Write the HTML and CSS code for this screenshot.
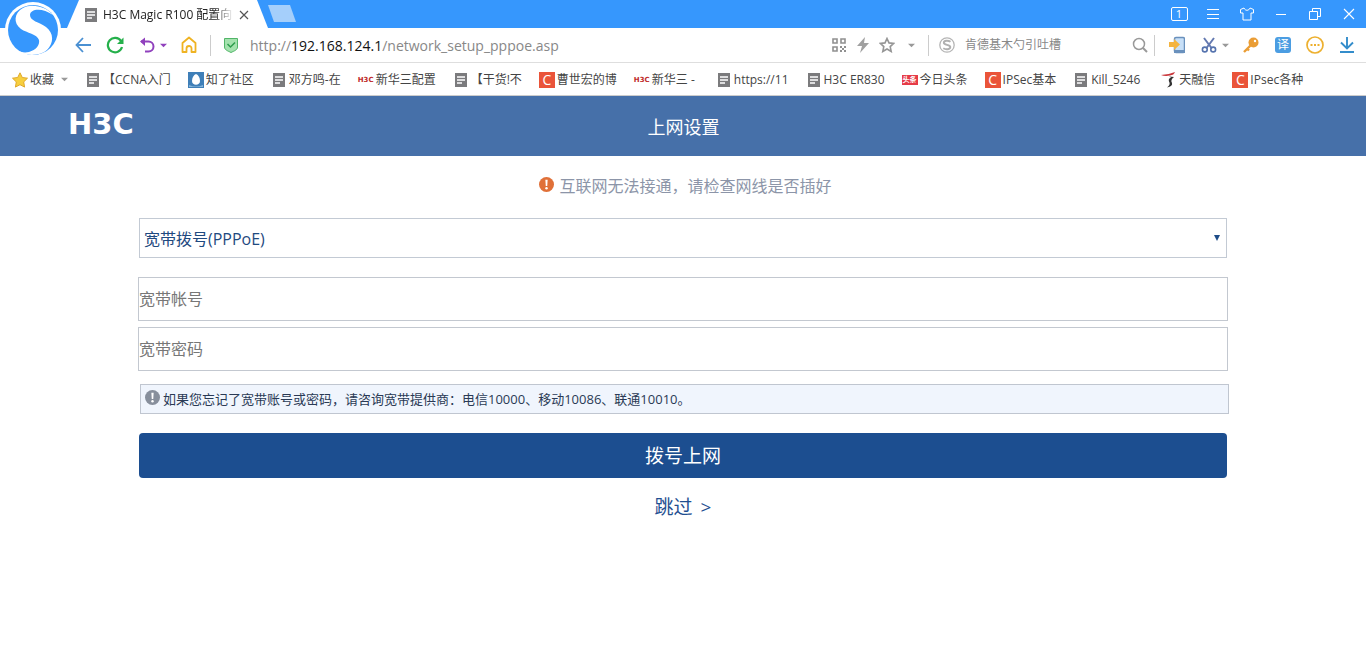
FILE: index.html
```html
<!DOCTYPE html>
<html lang="zh-CN">
<head>
<meta charset="utf-8">
<title>H3C Magic R100 配置向导</title>
<link rel="stylesheet" href="styles.css">
</head>
<body>
<svg width="0" height="0" class="defs" aria-hidden="true">
  <symbol id="doc" viewBox="0 0 16 16"><path d="M2 1h12v14H2z" fill="#7b7b7d"/><path d="M4 5h8M4 8h8M4 11h5" stroke="#fff" stroke-width="1.3"/></symbol>
  <symbol id="caret" viewBox="0 0 8 8"><path d="M0 2h8L4 6z"/></symbol>
  <symbol id="exclaim" viewBox="0 0 16 16"><circle cx="8" cy="8" r="8"/><path d="M6.800 3h2.400l-.4 6.500H7.200z" fill="#fff"/><circle cx="8" cy="12" r="1.300" fill="#fff"/></symbol>
</svg>

<div class="browser">
  <div class="logo">
    <svg viewBox="0 0 56 56" width="56" height="56"><circle cx="28" cy="28" r="28" fill="#fff"/><circle cx="28" cy="28" r="25" fill="#3697fd"/><path d="M48 13C42 5 27 1 18 6C9 11 8 21 16 27C22 31 32 32 34 38C35 43 31 48 24 50C19 51 15 50 12 48C18 54 34 55 42 48C49 41 49 31 41 25C34 20 25 19 25 13C25 7 37 5 48 13Z" fill="#fff"/></svg>
  </div>
  <div class="titlebar">
    <div class="tab">
      <svg class="i16"><use href="#doc"/></svg>
      <span class="tab-title">H3C Magic R100 配置向</span>
      <button class="tab-close" aria-label="关闭标签"><svg width="10" height="10" viewBox="0 0 10 10"><path d="M1 1l8 8M9 1L1 9" stroke="#555" stroke-width="1.200"/></svg></button>
    </div>
    <button class="newtab" aria-label="新标签"></button>
    <div class="window-buttons">
      <button aria-label="标签数"><span class="count">1</span></button>
      <button aria-label="菜单"><svg width="14" height="12" viewBox="0 0 14 12"><path d="M1 1.500h12M1 6.500h12M1 10.500h12" stroke="#fff" stroke-width="1"/></svg></button>
      <button aria-label="皮肤"><svg width="16" height="14" viewBox="0 0 16 14"><path d="M5 1L1.500 2.500V6H4v7h8V6h2.500V2.500L11 1C10 4 6 4 5 1z" fill="none" stroke="#fff"/></svg></button>
      <button aria-label="最小化"><svg width="12" height="12" viewBox="0 0 12 12"><path d="M1 6.500h10" stroke="#fff"/></svg></button>
      <button aria-label="还原"><svg width="12" height="12" viewBox="0 0 12 12"><path d="M.5 3.500h8v8h-8zM3.500 3V.5h8v8H9" fill="none" stroke="#fff"/></svg></button>
      <button aria-label="关闭"><svg width="12" height="12" viewBox="0 0 12 12"><path d="M1 1l10 10M11 1L1 11" stroke="#fff" stroke-width="1.100"/></svg></button>
    </div>
  </div>

  <div class="toolbar">
    <button class="tool" aria-label="后退"><svg width="16" height="16" viewBox="0 0 16 16"><path d="M8 1L1.500 8L8 15M2 8h14" fill="none" stroke="#4a90d2" stroke-width="1.800"/></svg></button>
    <button class="tool" aria-label="刷新"><svg width="18" height="18" viewBox="0 0 18 18"><path d="M15 5A7.200 7.200 0 1 0 16 11" fill="none" stroke="#25b04b" stroke-width="2.200"/><path d="M17.500 1.500V8H11z" fill="#25b04b"/></svg></button>
    <button class="tool wide" aria-label="撤销"><svg width="16" height="16" viewBox="0 0 16 16"><path d="M2 4.500h7.500a5 5 0 0 1 0 10H6" fill="none" stroke="#9041bd" stroke-width="2"/><path d="M6 .5L1 4.500l5 4.500" fill="#9041bd"/></svg><svg class="caret purple"><use href="#caret"/></svg></button>
    <button class="tool" aria-label="主页"><svg width="16" height="18" viewBox="0 0 16 18"><path d="M1.500 7L8 1.500L14.500 7v9h-4v-3.500a2.500 2.500 0 0 0-5 0V16h-4z" fill="none" stroke="#efb323" stroke-width="1.800" stroke-linejoin="round"/></svg></button>
    <span class="sep"></span>
    <svg class="shield" width="16" height="16" viewBox="0 0 16 16"><path d="M1.500 1.500h13V10C14.500 13 11 14 8 15.500C5 14 1.500 13 1.500 10z" fill="#a4e2ae" stroke="#51b568"/><path d="M4.500 7l3 3l4.500-4.500" fill="none" stroke="#2d9d4c" stroke-width="1.500"/></svg>
    <div class="url">http://<b>192.168.124.1</b>/network_setup_pppoe.asp</div>
    <button class="small" aria-label="二维码"><svg width="14" height="14" viewBox="0 0 14 14"><path d="M1 1h4v4H1zM9 1h4v4H9zM1 9h4v4H1z" fill="none" stroke="#909090" stroke-width="1.600"/><path d="M8 8h2v2H8zM12 8h2v2h-2zM10 10h2v2h-2zM8 12h2v2H8zM12 12h2v2h-2z" fill="#909090"/></svg></button>
    <button class="small" aria-label="加速"><svg width="14" height="16" viewBox="0 0 14 16"><path d="M9 0L1 9h5l-2 7l9-10H8z" fill="#a0a0a0"/></svg></button>
    <button class="small" aria-label="收藏本页"><svg width="16" height="16" viewBox="0 0 16 16"><path d="M8 1.500l2 4.400l4.600.5l-3.400 3.200l1 4.900L8 12l-4.200 2.500l1-4.900L1.400 6.400L6 5.900z" fill="none" stroke="#969696" stroke-width="1.600"/></svg></button>
    <button class="small" aria-label="展开"><svg class="caret"><use href="#caret"/></svg></button>
    <span class="sep"></span>
    <label class="search">
      <svg width="16" height="16" viewBox="0 0 16 16"><circle cx="8" cy="8" r="7.200" fill="none" stroke="#b5b5b5" stroke-width="1.300"/><path d="M11.500 4.800C9 3 4.800 3.500 4.800 5.800C4.800 8.300 11.300 7.500 11.300 10C11.300 12.500 7 13 4.300 11.300" fill="none" stroke="#b0b0b0" stroke-width="1.900"/></svg>
      <input type="text" placeholder="肯德基木勺引吐槽" aria-label="搜索">
      <svg width="16" height="16" viewBox="0 0 16 16"><circle cx="7" cy="7" r="5.500" fill="none" stroke="#999" stroke-width="1.500"/><path d="M11 11l4 4" stroke="#999" stroke-width="2"/></svg>
    </label>
    <span class="sep last"></span>
    <button class="tool" aria-label="手机"><svg width="16" height="18" viewBox="0 0 16 18"><rect x="5.500" y="1.500" width="10" height="15" rx="1.500" fill="#c8e0f8" stroke="#6a91bd" stroke-width="1.500"/><path d="M5 14h11v3H5z" fill="#6a91bd"/><path d="M0 6h5V3l6 5.500L5 14v-3H0z" fill="#f4b440"/></svg></button>
    <button class="tool wide" aria-label="截图"><svg width="16" height="16" viewBox="0 0 16 16"><path d="M3 1l7.500 10M13 1L5.500 11" stroke="#6479b0" stroke-width="2"/><circle cx="3.800" cy="12.500" r="2.400" fill="none" stroke="#5573ae" stroke-width="1.600"/><circle cx="12.200" cy="12.500" r="2.400" fill="none" stroke="#5573ae" stroke-width="1.600"/></svg><svg class="caret"><use href="#caret"/></svg></button>
    <button class="tool" aria-label="密码"><svg width="16" height="16" viewBox="0 0 16 16"><path d="M9 7L1 15M3.500 11l2.500 2.500" stroke="#ea9d35" stroke-width="2.400"/><circle cx="10.500" cy="5.500" r="5" fill="#ea9d35"/><circle cx="12" cy="4" r="1.200" fill="#fff"/></svg></button>
    <button class="tool" aria-label="翻译"><span class="translate">译</span></button>
    <button class="tool" aria-label="更多"><svg width="18" height="18" viewBox="0 0 18 18"><circle cx="9" cy="9" r="8" fill="none" stroke="#edb02f" stroke-width="1.700"/><path d="M4.500 8h2v2h-2zM8 8h2v2H8zM11.500 8h2v2h-2z" fill="#edb02f"/></svg></button>
    <button class="tool" aria-label="下载"><svg width="16" height="16" viewBox="0 0 16 16"><path d="M8 0v11M2 5.500l6 6l6-6M1 15h14" fill="none" stroke="#348dcb" stroke-width="1.900"/></svg></button>
  </div>

  <nav class="bookmarks">
    <a href="#" class="fav"><svg class="i16" viewBox="0 0 16 16"><path d="M8 .8l2.300 4.700l5.200.7l-3.800 3.700l.9 5.200L8 12.700l-4.600 2.400l.9-5.200L.5 6.200l5.200-.7z" fill="#f7cf3e" stroke="#dfa82c"/></svg>收藏<svg class="caret"><use href="#caret"/></svg></a>
    <a href="#"><svg class="i16"><use href="#doc"/></svg>【CCNA入门</a>
    <a href="#"><svg class="i16" viewBox="0 0 16 16"><path d="M0 0h16v16H0z" fill="#3f7fb8"/><path d="M8 2C5.500 3 4 6 4 9C4 14 12 14 12 9C12 6 10.500 3 8 2z" fill="#fff"/><path d="M1 13q7 3 14 0v2H1z" fill="#86b6dc"/></svg>知了社区</a>
    <a href="#"><svg class="i16"><use href="#doc"/></svg>邓方鸣-在</a>
    <a href="#"><span class="h3c-mark">H3C</span>新华三配置</a>
    <a href="#"><svg class="i16"><use href="#doc"/></svg>【干货!不</a>
    <a href="#"><span class="c-mark">C</span>曹世宏的博</a>
    <a href="#" class="trail"><span class="h3c-mark">H3C</span>新华三 -</a>
    <a href="#"><svg class="i16"><use href="#doc"/></svg>https://11</a>
    <a href="#"><svg class="i16"><use href="#doc"/></svg>H3C ER830</a>
    <a href="#"><span class="tt-mark">头条</span>今日头条</a>
    <a href="#"><span class="c-mark">C</span>IPSec基本</a>
    <a href="#" class="trail"><svg class="i16"><use href="#doc"/></svg>Kill_5246</a>
    <a href="#"><svg class="i16" viewBox="0 0 16 16"><path d="M0 3Q7 3 14 0Q13 3 9 3.500Q4 4.500 0 3z" fill="#c9353a"/><path d="M8 4.500l5 .5q-4 3-2 6q1 3-5 4.500q4-3 2-6q-1-3 2-4z" fill="#333"/></svg>天融信</a>
    <a href="#"><span class="c-mark">C</span>IPsec各种</a>
  </nav>
</div>

<header class="page-header">
  <div class="brand">H3C</div>
  <h1>上网设置</h1>
</header>

<main>
  <p class="alert"><svg width="15" height="15"><use href="#exclaim"/></svg><span>互联网无法接通，请检查网线是否插好</span></p>
  <form>
    <div class="select-wrap">
      <select aria-label="上网方式"><option>宽带拨号(PPPoE)</option></select>
      <svg class="select-arrow" viewBox="0 0 6 6"><path d="M0 0h6L3 6z" fill="#1e4c88"/></svg>
    </div>
    <input class="field" type="text" placeholder="宽带帐号" aria-label="宽带帐号">
    <input class="field" type="password" placeholder="宽带密码" aria-label="宽带密码">
    <p class="note"><svg width="15" height="15"><use href="#exclaim"/></svg><span>如果您忘记了宽带账号或密码，请咨询宽带提供商：电信10000、移动10086、联通10010。</span></p>
    <button class="submit" type="button">拨号上网</button>
  </form>
  <a class="skip" href="#"><span>跳过</span><span>&gt;</span></a>
</main>
</body>
</html>
```
FILE: styles.css
```css
* { box-sizing: border-box; }
body {
  margin: 0;
  background: #fff;
  font-family: "Open Sans", "Noto Sans CJK SC", sans-serif;
  font-size: 12px;
  color: #444;
}
button {
  display: flex;
  align-items: center;
  justify-content: center;
  padding: 0;
  border: 0;
  background: none;
  font-family: inherit;
}
a { color: inherit; text-decoration: none; }
svg { flex: none; display: block; }
.defs { position: absolute; }
.i16 { width: 16px; height: 16px; }
.caret { width: 7px; height: 7px; fill: #999; }
.caret.purple { fill: #9041bd; }

.browser { position: relative; }
.logo { position: absolute; left: 5px; top: 2px; z-index: 1; }

.titlebar {
  display: flex;
  height: 28px;
  padding-left: 67px;
  background: #3697fd;
}
.tab {
  display: flex;
  align-items: center;
  width: 201px;
  padding: 2px 18px 0 16px;
  background: #fff;
  clip-path: polygon(0 100%, 12px 0, 190px 0, 100% 100%);
}
.tab-title {
  flex: 1;
  margin-left: 4px;
  white-space: nowrap;
  line-height: 20px;
  color: #222;
  mask-image: linear-gradient(to right, #000 85%, transparent);
}
.tab-close { width: 12px; height: 16px; margin-left: 4px; }
.newtab {
  width: 28px;
  height: 17px;
  margin-top: 5px;
  background: #a5cffb;
  clip-path: polygon(0 0, 22px 0, 100% 100%, 6px 100%);
}
.window-buttons { display: flex; margin-left: auto; }
.window-buttons button { width: 34px; }
.count {
  width: 17px;
  border: 1px solid #fff;
  border-radius: 2px;
  font-size: 11px;
  line-height: 12px;
  color: #fff;
}

.toolbar {
  display: flex;
  align-items: center;
  height: 35px;
  padding: 0 3px 0 67px;
  border-bottom: 1px solid #dedede;
}
.tool { width: 32px; height: 28px; }
.tool.wide { width: 42px; gap: 5px; justify-content: flex-start; padding-left: 8px; }
.small { width: 24px; height: 28px; }
.sep { width: 1px; height: 21px; margin: 0 10px 0 5px; background: #ccc; }
.sep.last { margin: 0 6px; }
.shield { margin-left: 2px; }
.url { flex: 1; margin-left: 11px; padding-top: 1px; font-size: 14px; line-height: 20px; color: #888; white-space: nowrap; overflow: hidden; }
.url b { font-weight: 400; color: #111; }
.search { display: flex; align-items: center; width: 209px; }
.search input {
  flex: 1;
  min-width: 0;
  margin-left: 10px;
  padding: 0;
  border: 0;
  outline: 0;
  font: inherit;
  line-height: 20px;
}
.search input::placeholder { color: #888; }
.translate {
  width: 16px;
  border-radius: 3px;
  background: #4b9de2;
  color: #fff;
  font-size: 12px;
  line-height: 16px;
}

.bookmarks {
  display: flex;
  align-items: center;
  gap: 17px;
  height: 33px;
  padding: 1px 0 0 12px;
  border-bottom: 1px solid #ccc;
  overflow: hidden;
  white-space: nowrap;
}
.bookmarks a { display: flex; align-items: center; gap: 2px; line-height: 20px; }
.bookmarks .caret { margin-left: 5px; }
.bookmarks .trail { padding-right: 4px; }
.h3c-mark { width: 16px; font: bold 7px/16px "DejaVu Sans", sans-serif; color: #c02b2b; }
.c-mark { width: 16px; background: #ea5439; color: #fff; font-size: 14px; line-height: 16px; text-align: center; }
.tt-mark { width: 16px; background: #e63b47; color: #fff; font-size: 7px; font-weight: 700; line-height: 10px; text-align: center; }

.page-header {
  display: grid;
  grid-template-columns: 1fr auto 1fr;
  align-items: center;
  height: 60px;
  padding: 2px 67px 0 68px;
  background: #4670a9;
  color: #fff;
}
.brand { padding-bottom: 6px; font: bold 29px/32px "DejaVu Sans", sans-serif; }
.page-header h1 { margin: 0; font-size: 18px; font-weight: 400; line-height: 28px; }

main { padding: 18px 138px 0; }
p { margin: 0; }
.alert {
  display: flex;
  justify-content: center;
  gap: 5px;
  padding-left: 5px;
  font-size: 16px;
  line-height: 24px;
  color: #8c95a8;
}
.alert svg { margin-top: 3px; fill: #e07038; }
.select-wrap { position: relative; margin: 20px 1px 19px; }
select {
  display: block;
  width: 100%;
  height: 40px;
  padding: 1px 4px 0;
  border: 1px solid #c3cad4;
  border-radius: 0;
  background: #fff;
  appearance: none;
  font-family: inherit;
  font-size: 16px;
  color: #1f4a80;
}
.select-arrow { position: absolute; right: 7px; top: 17px; width: 6px; height: 6px; }
.field {
  display: block;
  width: 100%;
  height: 44px;
  margin-bottom: 6px;
  padding: 0;
  border: 1px solid #c3c8d0;
  font-family: inherit;
  font-size: 16px;
}
.field::placeholder { color: #777; }
.note {
  display: flex;
  gap: 3px;
  margin: 13px -1px 19px 2px;
  padding: 4px;
  border: 1px solid #c0c6d0;
  background: #f0f5fd;
  font-size: 13px;
  line-height: 20px;
  color: #2a3a55;
}
.note svg { margin-top: 1px; fill: #878f9c; }
.submit {
  width: calc(100% - 2px);
  height: 45px;
  margin: 0 1px;
  padding-bottom: 2px;
  border-radius: 4px;
  background: #1c4e90;
  color: #fff;
  font-size: 19px;
}
.skip {
  display: flex;
  justify-content: center;
  gap: 8px;
  margin-top: 15px;
  font-size: 19px;
  line-height: 28px;
  color: #1f4f91;
}
```
